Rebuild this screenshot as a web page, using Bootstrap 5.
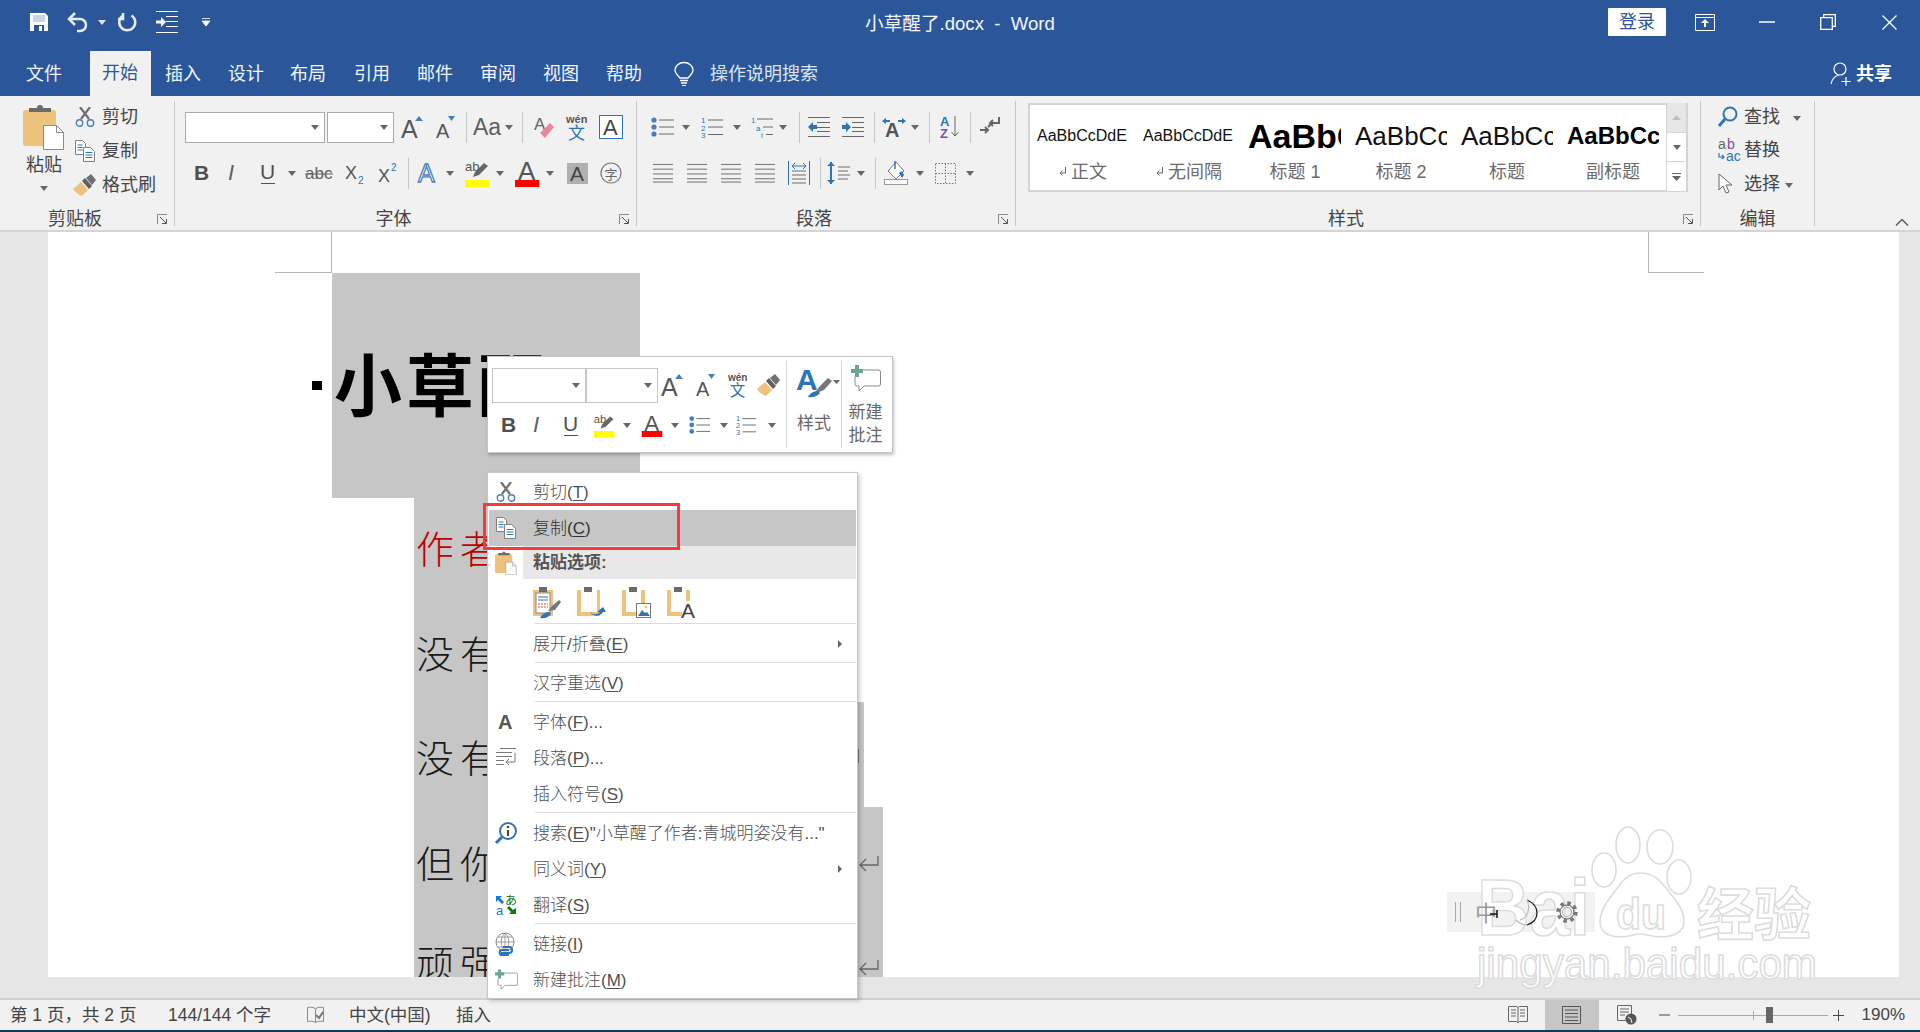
<!DOCTYPE html>
<html lang="zh-CN">
<head>
<meta charset="UTF-8" />
<title>小草醒了.docx - Word</title>
<link href="https://cdn.jsdelivr.net/npm/bootstrap@5.3.0/dist/css/bootstrap.min.css" rel="stylesheet" />
<style>
body { margin: 0; width: 1920px; height: 1032px; overflow: hidden; background: #e6e6e6; color: #444; font: 18px/24px "Liberation Sans", "Noto Sans CJK SC", sans-serif; }
svg { display: block; flex-shrink: 0; overflow: visible; }
svg text { font-family: "Liberation Sans", "Noto Sans CJK SC", sans-serif; }
.app { width: 1920px; height: 1032px; }
/* anchor: a zero-width cell, its content centred on the grid line */
.a { width: 0; display: flex; justify-content: center; align-items: center; white-space: nowrap; }
.row-a { display: grid; align-items: center; }
.arr { width: 0; height: 0; flex-shrink: 0; border-top: 5px solid #666; border-left: 4px solid transparent; border-right: 4px solid transparent; }
.arr-w { border-top-color: #dfe6f1; }
.sp { width: 1px; height: 31px; background: #c6c6c6; flex-shrink: 0; }

.titlebar { height: 51px; background: #2b579a; color: #f2f5fa; display: grid; grid-template-columns: 1fr auto 1fr; align-items: start; }
.qat { height: 44px; margin-left: 39px; grid-template-columns: 39px 24px 25px 40px 39px 0; }
.doc-name { font-size: 18.6px; line-height: 48px; white-space: nowrap; }
.win-side { height: 44px; }
.login { width: 58px; height: 28px; background: #fff; color: #2b579a; border-radius: 1px; line-height: 28px; text-align: center; margin-right: 39px; }
.win-ctl { grid-template-columns: 62px 61px 61px 31px; }
.tabs { height: 45px; background: #2b579a; color: #f2f5fa; }
.tabs .tab-list { grid-template-columns: 76px 63px 63px 62px 64px 63px 63px 63px 63px 60px 26px auto; height: 45px; margin-left: 44px; }
.tab-on { width: 61px; height: 45px; line-height: 45px; background: #f1f1f1; color: #2b579a; text-align: center; flex-shrink: 0; }
.search-tip { color: #dde5f0; }
.share { font-weight: 700; color: #fff; gap: 6px; margin-right: 28px; }

.ribbon { height: 136px; background: #f1f1f1; border-bottom: 2px solid #d4d4d4; display: flex; position: relative; }
.grp { margin-top: 5px; height: 125px; padding-top: 3px; border-right: 1px solid #c6c6c6; flex-shrink: 0; }
.g1 { width: 175px; } .g2 { width: 462px; } .g3 { width: 379px; } .g4 { width: 685px; } .g5 { width: 114px; }
.g-body { height: 104px; display: flow-root; }
.g-label { height: 22px; line-height: 22px; display: flex; color: #444; }
.g-label span { flex-grow: 1; text-align: center; }
.launch { width: 24px; display: flex; align-items: center; justify-content: center; }
.r46 { height: 46px; }
.paste { width: 62px; margin-left: 13px; }
.paste-txt { line-height: 24px; margin-top: 3px; }
.paste .arr { margin-top: 9px; }
.clip-rows { margin-top: -4px; }
.clip-row { height: 34px; display: flex; align-items: center; }
.clip-ic { width: 20px; display: flex; justify-content: center; }
.clip-row span { margin-left: 7px; white-space: nowrap; }
.combo { background: #fff; border: 1px solid #ababab; height: 31px; display: flex; align-items: center; justify-content: flex-end; padding-right: 5px; }
.c1 { width: 140px; margin-left: 10px; } .c2 { width: 67px; margin-left: 2px; }
.f1 { margin-left: 18px; grid-template-columns: 34px 20px 27px 29px 22px 33px 34px 10px; }
.f2 { margin-left: 26px; grid-template-columns: 33px 34px 24px 27px 36px 33px 20px 19px 23px 27px 23px 27px 23px 27px 34px 10px; }
.p1 { margin-left: 26px; grid-template-columns: 23px 27px 24px 26px 20px 16px 20px 34px 21px 20px 21px 14px 21px 20px 20px 10px; }
.p2 { margin-left: 26px; grid-template-columns: 34px 34px 34px 34px 21px 19px 22px 14px 21px 24px 25px 25px 10px; }
.aa { font-size: 23px; color: #5f5f5f; }
.gal { width: 660px; height: 89px; margin: -1px 0 0 12px; border: 2px solid #d4d4d4; background: #fff; display: flex; }
.gal-item { width: 106px; height: 85px; overflow: hidden; flex-shrink: 0; }
.gal-pre { width: 99px; height: 50px; margin-top: 6px; padding-left: 7px; line-height: 50px; color: #111; white-space: nowrap; overflow: hidden; font-family: "Liberation Sans", sans-serif; }
.pre-sm { font-size: 16px; }
.pre-h1 { font-size: 34px; font-weight: 700; color: #000; padding-left: 6px; }
.pre-h2 { font-size: 26px; }
.pre-bd { font-size: 24px; font-weight: 700; color: #000; }
.gal-lab { height: 22px; line-height: 22px; text-align: center; color: #6b6b6b; white-space: nowrap; display: flex; justify-content: center; align-items: center; gap: 4px; }
.gal-scroll { width: 21px; border-left: 1px solid #d4d4d4; display: flex; flex-direction: column; margin-top: -2px; margin-bottom: -2px; }
.gal-scroll div { flex: 1; display: flex; align-items: center; justify-content: center; border-bottom: 1px solid #d4d4d4; background: #fff; }
.gal-scroll .off { background: #e6e6e6; }
.edit-rows { margin-top: -4px; }
.edit-row { height: 33.5px; display: flex; align-items: center; }
.edit-row .ei { width: 54px; padding-left: 17px; display: flex; justify-content: flex-start; }
.edit-row span { margin-left: -11px; white-space: nowrap; }
.edit-row .arr { margin-top: 4px; }
.edit-row .arr-f { margin-left: 13px; }
.edit-row .arr-s { margin-left: 5px; }
.chev { position: absolute; right: 11px; bottom: 4px; }

.doc { height: 766px; background: #e6e6e6; }
.page { width: 1851px; height: 745px; margin-left: 48px; background: #fff; overflow: hidden; color: #000; }
.crop-row { height: 41px; display: flex; }
.crop-l { width: 57px; margin-left: 227px; border-right: 1px solid #b5b5b5; border-bottom: 1px solid #b5b5b5; }
.crop-r { width: 56px; margin-left: 1316px; border-left: 1px solid #b5b5b5; border-bottom: 1px solid #b5b5b5; }
.title-row { display: flex; margin-left: 264px; height: 225px; }
.bullet-col { width: 20px; padding-top: 108px; }
.bullet-sq { width: 10px; height: 9px; background: #000; }
.title-sel { width: 308px; background: #c6c6c6; padding: 74px 0 0 2px; font-size: 68px; line-height: 80px; letter-spacing: 4px; font-weight: 700; white-space: nowrap; color: #000; overflow: hidden; }
.ln { margin-left: 366px; background: #c6c6c6; color: #1a1a1a; font-size: 38px; line-height: 44px; letter-spacing: 6px; font-weight: 300; padding-left: 2px; display: flex; justify-content: space-between; overflow: hidden; }
.ln-1 { height: 102px; width: 440px; padding-top: 30px; color: #c00000; }
.ln-2 { height: 102px; width: 440px; padding-top: 33px; }
.ln-3 { height: 105px; width: 450px; padding-top: 35px; }
.ln-4 { height: 110px; width: 469px; padding-top: 36px; }
.ln-5 { height: 60px; width: 469px; padding-top: 25px; }
.tick { width: 1px; height: 14px; margin: 12px 5px 0 0; background: #777; }
.ret { margin-right: 4px; }
.ln-4 .ret { margin-top: 13px; }
.ln-5 .ret { margin-top: 18px; }

.ctx { position: absolute; left: 487px; top: 472px; width: 371px; height: 527px; padding: 1px; margin: 0; display: block; border: 1px solid #c6c6c6; border-radius: 0; box-shadow: 2px 2px 4px rgba(0,0,0,.2); font-size: 17px; color: #505050; background: #fff; }
.ctx li { list-style: none; }
.ctx .dropdown-item { height: 36px; padding: 0; display: flex; align-items: center; color: #505050; position: relative; }
.ctx .dropdown-item.active { background: #c6c6c6; color: #333; }
.ctx u { text-underline-offset: 2px; }
.mi { width: 34px; display: flex; justify-content: center; flex-shrink: 0; }
.mt { margin-left: 10px; padding-top: 1px; white-space: nowrap; font-weight: 300; }
.sub { width: 0; height: 0; margin-left: auto; margin-right: 14px; border-left: 4px solid #666; border-top: 4px solid transparent; border-bottom: 4px solid transparent; }
.ctx-sep { height: 3px; margin: 0 0 0 46px; border-top: 1px solid #dcdcdc; }
.ctx-head { height: 33px; display: flex; align-items: center; }
.ctx-head .hd { flex-grow: 1; background: #e8e8e8; height: 33px; line-height: 33px; padding-left: 10px; font-weight: 700; color: #555; }
.ctx-paste { height: 44px; display: flex; align-items: center; padding: 4px 0 0 42px; gap: 15px; }
.redbox { position: absolute; left: 483px; top: 503px; width: 197px; height: 47px; border: 3px solid #f43a3a; z-index: 1001; }

.mini { position: absolute; left: 487px; top: 356px; width: 406px; height: 97px; background: #fff; border: 1px solid #c6c6c6; box-shadow: 1px 2px 3px rgba(0,0,0,.25); display: flex; }
.mini-left { width: 299px; border-right: 1px solid #d8d8d8; margin: 4px 0; }
.mini-r1 { height: 48px; display: flex; align-items: center; margin-top: -1px; padding-left: 4px; padding-top: 2px; }
.mini-r1 .combo { height: 35px; border-color: #c6c6c6; }
.mc1 { width: 96px; } .mc2 { width: 74px; }
.m1 { margin-left: 14px; grid-template-columns: 34px 32px 31px 17px; }
.m2 { margin-left: 20px; height: 34px; grid-template-columns: 31px 32px 33px 23px 25px 23px 25px 24px 23px 25px 15px; }
.mini-col { display: flex; flex-direction: column; align-items: center; font-size: 17px; line-height: 23px; color: #666; margin: 4px 0; }
.mc-s { width: 55px; border-right: 1px solid #d8d8d8; }
.mc-c { width: 47px; }
.mc-s svg { margin: 5px 0 14px 6px; }
.mc-c svg { margin: 4px 0 8px 0; }

.statusbar { height: 34px; font-size: 17.5px; background: #f1f1f1; border-top: 2px solid #d0d0d0; border-bottom: 2px solid #0f3a57; display: flex; align-items: center; color: #444; }
.sb-left { padding-left: 10px; grid-template-columns: 158px 139px 42px 107px auto; white-space: nowrap; }
.sb-right { margin-left: auto; display: flex; align-items: center; height: 30px; white-space: nowrap; }
.sb-v { height: 30px; display: flex; align-items: center; justify-content: center; }
.v1 { width: 54px; } .v2 { width: 54px; background: #c6c6c6; } .v3 { width: 56px; } .v4 { width: 20px; }
.slider { width: 150px; height: 1px; margin: 0 1px 0 3px; background: #a8a8a8; position: relative; }
.sl-tick { position: absolute; left: 75px; top: -4px; width: 1px; height: 9px; background: #a8a8a8; }
.sl-thumb { position: absolute; left: 88px; top: -8px; width: 7px; height: 16px; background: #666; }
.zoom-pct { margin: 0 15px 0 13px; font-size: 17px; }

.ime { position: absolute; left: 1447px; top: 892px; width: 148px; height: 40px; background: #f2f2f2; display: flex; align-items: center; }
.ime-bar { width: 6px; height: 20px; margin-left: 8px; border-left: 1px solid #aaa; border-right: 1px solid #aaa; }
.wm { position: absolute; left: 1470px; top: 825px; }
</style>
</head>
<body>
<svg width="0" height="0" class="position-absolute">
  <symbol id="scis" viewBox="0 0 20 20"><path d="M5 0l9 12M15 0L6 12" stroke="#6f6f6f" stroke-width="2.2" fill="none"/><circle cx="4.5" cy="16" r="3.2" fill="none" stroke="#4a7ebb" stroke-width="1.4"/><circle cx="15.5" cy="16" r="3.2" fill="none" stroke="#4a7ebb" stroke-width="1.4"/></symbol>
  <symbol id="copy" viewBox="0 0 20 22"><path d="M.5.5h7l3 3v11H.5z" fill="#fff" stroke="#7f7f7f"/><path d="M8.5 7.5h7l4 4v10h-11z" fill="#fff" stroke="#7f7f7f"/><path d="M2.5 5h5M2.5 7.5h5M2.5 10h5M10.5 12.5h7M10.5 15h7M10.5 17.5h7" stroke="#2e75b6"/></symbol>
  <symbol id="brush" viewBox="0 0 24 22"><path d="M0 15l8-7 7 8-6 6c-3-1-7-4-9-7z" fill="#edc27c"/><path d="M9 7l3-3 7 8-3 3z" fill="#5f5f5f"/><path d="M13 4l5-4 5 6-4 5z" fill="#707070"/></symbol>
  <symbol id="clipb" viewBox="0 0 42 46"><rect x="0" y="6" width="33" height="36" rx="2" fill="#edc27c"/><path d="M6 8V4h8a3 3 0 0 1 6 0h8v4z" fill="#6b6b6b"/><path d="M20.500 21.500h13l7 7v17h-20z" fill="#fff" stroke="#8a8a8a"/><path d="M33.500 21.500v7h7" fill="none" stroke="#8a8a8a"/></symbol>
  <symbol id="launch" viewBox="0 0 11 11"><path d="M.5 10V.5H10" fill="none" stroke="#8a8a8a"/><path d="M3 3l6 6M5 9.500h4.500V5" fill="none" stroke="#555"/></symbol>
  <symbol id="bul" viewBox="0 0 24 20"><g fill="#4a7ebb"><circle cx="3" cy="3" r="2.600"/><circle cx="3" cy="10" r="2.600"/><circle cx="3" cy="17" r="2.600"/></g><path d="M8 3h15M8 10h15M8 17h15" stroke="#666"/></symbol>
  <symbol id="cmt" viewBox="0 0 30 28"><path d="M7.500 5h20a2 2 0 0 1 2 2v12a2 2 0 0 1-2 2H13l-5 5v-5H6a2 2 0 0 1-2-2v-7" fill="#fff" stroke="#888"/><path d="M4 0h4v4h4v4H8v4H4V8H0V4h4z" fill="#6ba58f"/></symbol>
  <symbol id="al" viewBox="0 0 22 20"><path d="M0 1h21M0 6h21M0 11h21M0 16h21M0 19.500h21" stroke="#6b6b6b"/></symbol>
  <symbol id="ret" viewBox="0 0 20 16"><path d="M19 0v9H1M7 3L1 9l6 6" fill="none" stroke="#666" stroke-width="1.300"/></symbol>
</svg>

<div class="app">
  <div class="titlebar">
    <div class="row-a qat">
      <div class="a"><svg width="20" height="20" viewBox="0 0 20 20"><path fill="#fff" d="M1 1h15l3 3v15H1z"/><rect x="4" y="3" width="12" height="7" fill="#c9d6e8"/><rect x="5" y="13" width="10" height="6" fill="#2b579a"/><rect x="10" y="14" width="3" height="5" fill="#fff"/></svg></div>
      <div class="a"><svg width="22" height="20" viewBox="0 0 22 20"><path d="M8 1L2 7l6 6M3 7h10a6 6 0 0 1 0 12h-3" fill="none" stroke="#e6ecf5" stroke-width="2.500"/></svg></div>
      <div class="a"><span class="arr arr-w"></span></div>
      <div class="a"><svg width="20" height="20" viewBox="0 0 20 20"><path d="M6 3.500a8 8 0 1 0 8.500 0M6 1v6H1" fill="none" stroke="#e6ecf5" stroke-width="2.500"/></svg></div>
      <div class="a"><svg width="22" height="22" viewBox="0 0 22 22"><path d="M0 .5h22M10 5.500h12M10 10.500h12M10 15.500h12M0 21.500h22" stroke="#fff"/><path d="M0 9.500h5V6l5 5-5 5v-3.500H0z" fill="#fff"/></svg></div>
      <div class="a"><svg width="8" height="8" viewBox="0 0 8 8"><path d="M0 .5h8M0 3h8L4 8z" stroke="#fff" fill="#fff" stroke-width=".8"/></svg></div>
    </div>
    <div class="doc-name">小草醒了.docx&nbsp; -&nbsp; Word</div>
    <div class="win-side d-flex justify-content-end align-items-center">
      <div class="login">登录</div>
      <div class="row-a win-ctl">
        <div class="a"><svg width="20" height="17" viewBox="0 0 20 17"><path d="M.5.500h19v16H.5zM.5 3.500h19" fill="none" stroke="#fff"/><path d="M10 5l4 4h-3v4H9V9H6z" fill="#fff"/></svg></div>
        <div class="a"><svg width="16" height="2" viewBox="0 0 16 2"><path d="M0 1h16" stroke="#fff" stroke-width="1.500"/></svg></div>
        <div class="a"><svg width="16" height="16" viewBox="0 0 16 16"><path d="M.7 3.700h11.600v11.600H.7zM3.700 3.700V.7h11.600v11.600h-3" fill="none" stroke="#fff" stroke-width="1.300"/></svg></div>
        <div class="a"><svg width="15" height="15" viewBox="0 0 15 15"><path d="M.5.500l14 14M14.500.500l-14 14" stroke="#fff" stroke-width="1.300"/></svg></div>
      </div>
    </div>
  </div>

  <div class="tabs d-flex justify-content-between">
    <div class="row-a tab-list">
      <div class="a">文件</div><div class="a"><div class="tab-on">开始</div></div><div class="a">插入</div><div class="a">设计</div><div class="a">布局</div><div class="a">引用</div><div class="a">邮件</div><div class="a">审阅</div><div class="a">视图</div><div class="a">帮助</div>
      <div class="a"><svg width="20" height="24" viewBox="0 0 20 24"><path d="M6 16C3 13 1 11 1 8a9 7.500 0 0 1 18 0c0 3-2 5-5 8z" fill="none" stroke="#fff" stroke-width="1.300"/><path d="M6 18.500h8M7 21h6" stroke="#fff" stroke-width="1.500"/><path d="M8 23.500h4" stroke="#fff"/></svg></div>
      <div class="search-tip text-nowrap">操作说明搜索</div>
    </div>
    <div class="share d-flex align-items-center">
      <svg width="20" height="24" viewBox="0 0 20 24"><circle cx="10" cy="7" r="6" fill="none" stroke="#fff" stroke-width="1.200"/><path d="M1 22c1-5 4-8 8-9" fill="none" stroke="#fff" stroke-width="1.200"/><path d="M16 15v9M11.500 19.500h9" stroke="#fff" stroke-width="1.200"/></svg>
      <span>共享</span>
    </div>
  </div>

  <div class="ribbon">
    <div class="grp g1">
      <div class="g-body d-flex">
        <div class="paste d-flex flex-column align-items-center">
          <svg width="42" height="46"><use href="#clipb"/></svg>
          <div class="paste-txt">粘贴</div>
          <span class="arr"></span>
        </div>
        <div class="clip-rows">
          <div class="clip-row"><div class="clip-ic"><svg width="20" height="20"><use href="#scis"/></svg></div><span>剪切</span></div>
          <div class="clip-row"><div class="clip-ic"><svg width="20" height="22"><use href="#copy"/></svg></div><span>复制</span></div>
          <div class="clip-row"><div class="clip-ic"><svg width="24" height="22"><use href="#brush"/></svg></div><span>格式刷</span></div>
        </div>
      </div>
      <div class="g-label"><span>剪贴板</span><div class="launch"><svg width="11" height="11"><use href="#launch"/></svg></div></div>
    </div>

    <div class="grp g2">
      <div class="g-body">
        <div class="d-flex align-items-center r46">
          <div class="combo c1"><span class="arr"></span></div>
          <div class="combo c2"><span class="arr"></span></div>
          <div class="row-a f1">
            <div class="a"><svg width="22" height="24" viewBox="0 0 22 24"><text x="0" y="23" font-size="25" fill="#555">A</text><path d="M14 6l4-5 4 5z" fill="#4a7ebb"/></svg></div>
            <div class="a"><svg width="20" height="24" viewBox="0 0 20 24"><text x="0" y="23" font-size="20" fill="#555">A</text><path d="M12 1h7l-3.500 5z" fill="#4a7ebb"/></svg></div>
            <div class="a"><span class="sp"></span></div>
            <div class="a gap-1"><span class="aa">Aa</span><span class="arr"></span></div>
            <div class="a"><span class="sp"></span></div>
            <div class="a"><svg width="20" height="24" viewBox="0 0 20 24"><text x="0" y="15" font-size="17" fill="#666">A</text><path d="M6 18l10-10 4 4-9 11z" fill="#e8899b"/></svg></div>
            <div class="a"><svg width="22" height="26" viewBox="0 0 22 26"><text x="0" y="9" font-size="11" font-weight="700" fill="#555">wén</text><text x="2" y="25" font-size="17" fill="#2e75b6">文</text></svg></div>
            <div class="a"><svg width="24" height="24" viewBox="0 0 24 24"><rect x=".5" y=".5" width="23" height="23" fill="#fff" stroke="#2e75b6"/><text x="4" y="20" font-size="22" fill="#444">A</text></svg></div>
          </div>
        </div>
        <div class="row-a f2 r46">
          <div class="a"><svg width="16" height="22" viewBox="0 0 16 22"><text x="1" y="18" font-size="21" font-weight="700" fill="#505050">B</text></svg></div>
          <div class="a"><svg width="14" height="22" viewBox="0 0 14 22"><text x="1" y="18" font-size="22" font-style="italic" fill="#606060">I</text></svg></div>
          <div class="a"><svg width="16" height="24" viewBox="0 0 16 24"><text x="0" y="18" font-size="21" fill="#505050">U</text><path d="M1 22.500h14" stroke="#505050"/></svg></div>
          <div class="a"><span class="arr"></span></div>
          <div class="a"><svg width="28" height="20" viewBox="0 0 28 20"><text x="0" y="16" font-size="17" fill="#606060">abc</text><path d="M0 11h28" stroke="#606060"/></svg></div>
          <div class="a"><svg width="20" height="22" viewBox="0 0 20 22"><text x="0" y="17" font-size="18" fill="#555">X</text><text x="13" y="22" font-size="10" fill="#2e75b6">2</text></svg></div>
          <div class="a"><svg width="20" height="22" viewBox="0 0 20 22"><text x="0" y="20" font-size="18" fill="#555">X</text><text x="13" y="9" font-size="10" fill="#2e75b6">2</text></svg></div>
          <div class="a"><span class="sp"></span></div>
          <div class="a"><svg width="20" height="24" viewBox="0 0 20 24"><text x="1" y="21" font-size="25" fill="#fff" stroke="#4a7ebb" stroke-width="1.300">A</text></svg></div>
          <div class="a"><span class="arr"></span></div>
          <div class="a"><svg width="24" height="28" viewBox="0 0 24 28"><text x="0" y="12" font-size="13" fill="#555">ab</text><path d="M8 18l2-5 9-9 4 3-9 9z" fill="#666"/><rect x="0" y="21" width="24" height="7" fill="#ffff00"/></svg></div>
          <div class="a"><span class="arr"></span></div>
          <div class="a"><svg width="24" height="28" viewBox="0 0 24 28"><text x="3" y="21" font-size="26" fill="#555">A</text><rect x="0" y="21" width="24" height="7" fill="#f00"/></svg></div>
          <div class="a"><span class="arr"></span></div>
          <div class="a"><svg width="21" height="21" viewBox="0 0 21 21"><rect width="21" height="21" fill="#b0b0b0"/><text x="3" y="18" font-size="21" fill="#444">A</text></svg></div>
          <div class="a"><svg width="22" height="22" viewBox="0 0 22 22"><circle cx="11" cy="11" r="10" fill="none" stroke="#777" stroke-width="1.200"/><text x="4.500" y="17" font-size="13" fill="#666">字</text></svg></div>
        </div>
      </div>
      <div class="g-label"><span>字体</span><div class="launch"><svg width="11" height="11"><use href="#launch"/></svg></div></div>
    </div>

    <div class="grp g3">
      <div class="g-body">
        <div class="row-a p1 r46">
          <div class="a"><svg width="24" height="20"><use href="#bul"/></svg></div>
          <div class="a"><span class="arr"></span></div>
          <div class="a"><svg width="24" height="22" viewBox="0 0 24 22"><g font-size="8" fill="#2e75b6"><text x="0" y="7">1</text><text x="0" y="14.500">2</text><text x="0" y="22">3</text></g><path d="M7 4h15M7 11h15M7 18.500h15" stroke="#666"/></svg></div>
          <div class="a"><span class="arr"></span></div>
          <div class="a"><svg width="24" height="22" viewBox="0 0 24 22"><g font-size="8" fill="#2e75b6"><text x="0" y="7">1</text><text x="5" y="14.500">a</text><text x="10" y="22">i</text></g><path d="M6 3h16M12 11h10M15 18.500h7" stroke="#666"/></svg></div>
          <div class="a"><span class="arr"></span></div>
          <div class="a"><span class="sp"></span></div>
          <div class="a"><svg width="22" height="20" viewBox="0 0 22 20"><path d="M0 .5h22M9 5.500h13M9 10.500h13M9 14.500h13M0 19.500h22" stroke="#666"/><path d="M0 10l5-5v3h4v4H5v3z" fill="#2e75b6"/></svg></div>
          <div class="a"><svg width="22" height="20" viewBox="0 0 22 20"><path d="M0 .5h22M10 5.500h12M10 10.500h12M10 14.500h12M0 19.500h22" stroke="#666"/><path d="M9 10L4 5v3H0v4h4v3z" fill="#2e75b6"/></svg></div>
          <div class="a"><span class="sp"></span></div>
          <div class="a"><svg width="24" height="20" viewBox="0 0 24 20"><text x="3" y="20" font-size="20" font-weight="700" fill="#555">A</text><path d="M0 4l4-3v2h4v2H4v2zM24 4l-4-3v2h-4v2h4v2z" fill="#2e75b6"/></svg></div>
          <div class="a"><span class="arr"></span></div>
          <div class="a"><span class="sp"></span></div>
          <div class="a"><svg width="20" height="24" viewBox="0 0 20 24"><text x="0" y="11" font-size="13" font-weight="700" fill="#2e75b6">A</text><text x="0" y="23" font-size="13" font-weight="700" fill="#7f4fa6">Z</text><path d="M15 1v20M11.500 17l3.500 4 3.500-4" fill="none" stroke="#666"/></svg></div>
          <div class="a"><span class="sp"></span></div>
          <div class="a"><svg width="20" height="20" viewBox="0 0 20 20"><path d="M19 0v6H10M13 3l-3 3 3 3" fill="none" stroke="#666" stroke-width="2"/><path d="M0 13h8M5 10l3 3-3 3M12 6L8 10" fill="none" stroke="#666" stroke-width="2"/></svg></div>
        </div>
        <div class="row-a p2 r46">
          <div class="a"><svg width="21" height="20"><use href="#al"/></svg></div>
          <div class="a"><svg width="21" height="20"><use href="#al"/></svg></div>
          <div class="a"><svg width="21" height="20"><use href="#al"/></svg></div>
          <div class="a"><svg width="21" height="20"><use href="#al"/></svg></div>
          <div class="a"><svg width="22" height="24" viewBox="0 0 22 24"><path d="M4 10h14M4 14h14M4 18h14M4 22h14" stroke="#6b6b6b"/><path d="M.5 0v24M21.500 0v24M4 5h14M7 2L4 5l3 3M15 2l3 3-3 3" fill="none" stroke="#2e75b6"/></svg></div>
          <div class="a"><span class="sp"></span></div>
          <div class="a"><svg width="24" height="24" viewBox="0 0 24 24"><path d="M4 1v22" stroke="#2e75b6" stroke-width="2"/><path d="M0 5l4-4 4 4zM0 19l4 4 4-4z" fill="#2e75b6"/><path d="M11 6h12M11 10h10M11 14h12M11 18h10" stroke="#6b6b6b"/></svg></div>
          <div class="a"><span class="arr"></span></div>
          <div class="a"><span class="sp"></span></div>
          <div class="a"><svg width="24" height="24" viewBox="0 0 24 24"><path d="M12 1l8 9-8 8-8-8z" fill="#fff" stroke="#777"/><path d="M11 0v8" stroke="#2e75b6" stroke-width="1.500"/><path d="M15 12l3-2 2 4-2 3z" fill="#2e75b6"/><rect x=".5" y="18.500" width="23" height="5" fill="#fff" stroke="#999"/></svg></div>
          <div class="a"><span class="arr"></span></div>
          <div class="a"><svg width="21" height="21" viewBox="0 0 21 21"><path d="M.5.500h20v20H.5zM10.500.500v20M.5 10.500h20" fill="none" stroke="#777" stroke-dasharray="1.500 1.500"/></svg></div>
          <div class="a"><span class="arr"></span></div>
        </div>
      </div>
      <div class="g-label"><span>段落</span><div class="launch"><svg width="11" height="11"><use href="#launch"/></svg></div></div>
    </div>

    <div class="grp g4">
      <div class="g-body">
        <div class="gal">
          <div class="gal-item"><div class="gal-pre pre-sm">AaBbCcDdE</div><div class="gal-lab"><svg width="8" height="10" viewBox="0 0 8 10"><path d="M6.500 0v6H1M3.500 3.500L1 6l2.500 2.500" fill="none" stroke="#666"/></svg>正文</div></div>
          <div class="gal-item"><div class="gal-pre pre-sm">AaBbCcDdE</div><div class="gal-lab"><svg width="8" height="10" viewBox="0 0 8 10"><path d="M6.500 0v6H1M3.500 3.500L1 6l2.500 2.500" fill="none" stroke="#666"/></svg>无间隔</div></div>
          <div class="gal-item"><div class="gal-pre pre-h1">AaBbCc</div><div class="gal-lab">标题 1</div></div>
          <div class="gal-item"><div class="gal-pre pre-h2">AaBbCc</div><div class="gal-lab">标题 2</div></div>
          <div class="gal-item"><div class="gal-pre pre-h2">AaBbCc</div><div class="gal-lab">标题</div></div>
          <div class="gal-item"><div class="gal-pre pre-bd">AaBbCc</div><div class="gal-lab">副标题</div></div>
          <div class="gal-scroll">
            <div class="off"><svg width="9" height="5" viewBox="0 0 9 5"><path d="M4.500 0L9 5H0z" fill="#c0c0c0"/></svg></div>
            <div><span class="arr"></span></div>
            <div><svg width="9" height="8" viewBox="0 0 9 8"><path d="M0 .5h9" stroke="#666"/><path d="M0 3h9L4.500 8z" fill="#666"/></svg></div>
          </div>
        </div>
      </div>
      <div class="g-label"><span>样式</span><div class="launch"><svg width="11" height="11"><use href="#launch"/></svg></div></div>
    </div>

    <div class="grp g5">
      <div class="g-body">
        <div class="edit-rows">
          <div class="edit-row"><div class="ei"><svg width="20" height="22" viewBox="0 0 20 22"><circle cx="12" cy="8" r="6.500" fill="none" stroke="#2e75b6" stroke-width="2"/><path d="M7 13l-6 7" stroke="#2e75b6" stroke-width="3"/></svg></div><span>查找</span><span class="arr arr-f"></span></div>
          <div class="edit-row"><div class="ei"><svg width="24" height="24" viewBox="0 0 24 24"><text x="0" y="11" font-size="14" fill="#666">a</text><text x="9" y="11" font-size="14" fill="#7f4fa6">b</text><text x="8" y="23" font-size="14" fill="#2e75b6">ac</text><path d="M1 15v4h5M4 17l2 2-2 2" fill="none" stroke="#2e75b6" stroke-width="1.200"/></svg></div><span>替换</span></div>
          <div class="edit-row"><div class="ei"><svg width="16" height="22" viewBox="0 0 16 22"><path d="M1 1v16l4-4 3 7 3-1-3-7h6z" fill="#fff" stroke="#666"/></svg></div><span>选择</span><span class="arr arr-s"></span></div>
        </div>
      </div>
      <div class="g-label"><span>编辑</span></div>
    </div>
    <svg class="chev" width="14" height="8" viewBox="0 0 14 8"><path d="M1 7.500l6-6 6 6" fill="none" stroke="#555" stroke-width="1.300"/></svg>
  </div>

  <div class="doc">
    <div class="page">
      <div class="crop-row"><div class="crop-l"></div><div class="crop-r"></div></div>
      <div class="title-row">
        <div class="bullet-col"><div class="bullet-sq"></div></div>
        <div class="title-sel">小草醒</div>
      </div>
      <div class="ln ln-1"><span>作者</span></div>
      <div class="ln ln-2"><span>没有</span></div>
      <div class="ln ln-3"><span>没有</span><span class="tick"></span></div>
      <div class="ln ln-4"><span>但你</span><svg class="ret" width="20" height="16"><use href="#ret"/></svg></div>
      <div class="ln ln-5"><span>顽强</span><svg class="ret" width="20" height="16"><use href="#ret"/></svg></div>
    </div>
  </div>

  <div class="statusbar">
    <div class="row-a sb-left">
      <div>第 1 页，共 2 页</div>
      <div>144/144 个字</div>
      <div><svg width="18" height="18" viewBox="0 0 18 18"><path d="M8.500 3C7 1 3 1 .5 1.500v14c3-.5 6-.5 8 1 2-1.500 5-1.500 8-1V1.500C14 1 10 1 8.500 3zv13" fill="none" stroke="#888"/><path d="M9 9l3 3 4-6" fill="none" stroke="#777" stroke-width="2"/></svg></div>
      <div>中文(中国)</div>
      <div>插入</div>
    </div>
    <div class="sb-right">
      <div class="sb-v v1"><svg width="20" height="18" viewBox="0 0 20 18"><path d="M.5.500h8l1.500 1 1.500-1h8v15h-8L10 17l-1.500-1.500h-8zM10 1.500V17M3 4h5M3 7h5M3 10h5M12 4h5M12 7h5M12 10h5" fill="none" stroke="#666"/></svg></div>
      <div class="sb-v v2"><svg width="19" height="18" viewBox="0 0 19 18"><path d="M.5.500h18v17H.5zM3 4h13M3 7.500h13M3 11h13M3 14.500h13" fill="none" stroke="#555"/></svg></div>
      <div class="sb-v v3"><svg width="20" height="20" viewBox="0 0 20 20"><path d="M.5.500h14v15H.5zM3 4h9M3 7h9M3 10h5" fill="none" stroke="#666"/><circle cx="14" cy="14" r="5.500" fill="#555"/><path d="M11 12l3 2 1 4" fill="none" stroke="#fff"/></svg></div>
      <div class="sb-v v4"><svg width="11" height="2" viewBox="0 0 11 2"><path d="M0 1h11" stroke="#444"/></svg></div>
      <div class="slider"><span class="sl-tick"></span><span class="sl-thumb"></span></div>
      <div class="sb-v v4"><svg width="11" height="11" viewBox="0 0 11 11"><path d="M0 5.500h11M5.500 0v11" stroke="#444"/></svg></div>
      <div class="zoom-pct">190%</div>
    </div>
  </div>

  <div class="mini">
    <div class="mini-left">
      <div class="mini-r1">
        <div class="combo mc1"><span class="arr"></span></div>
        <div class="combo mc2"><span class="arr"></span></div>
        <div class="row-a m1">
          <div class="a"><svg width="22" height="24" viewBox="0 0 22 24"><text x="0" y="23" font-size="25" fill="#555">A</text><path d="M14 6l4-5 4 5z" fill="#4a7ebb"/></svg></div>
          <div class="a"><svg width="20" height="24" viewBox="0 0 20 24"><text x="0" y="23" font-size="20" fill="#555">A</text><path d="M12 1h7l-3.500 5z" fill="#4a7ebb"/></svg></div>
          <div class="a"><svg width="20" height="24" viewBox="0 0 22 26"><text x="0" y="9" font-size="11" font-weight="700" fill="#555">wén</text><text x="2" y="25" font-size="17" fill="#2e75b6">文</text></svg></div>
          <div class="a"><svg width="24" height="22"><use href="#brush"/></svg></div>
        </div>
      </div>
      <div class="row-a m2">
        <div class="a"><svg width="16" height="22" viewBox="0 0 16 22"><text x="1" y="18" font-size="21" font-weight="700" fill="#505050">B</text></svg></div>
        <div class="a"><svg width="14" height="22" viewBox="0 0 14 22"><text x="1" y="18" font-size="22" font-style="italic" fill="#606060">I</text></svg></div>
        <div class="a"><svg width="16" height="24" viewBox="0 0 16 24"><text x="0" y="18" font-size="21" fill="#505050">U</text><path d="M1 22.500h14" stroke="#505050"/></svg></div>
        <div class="a"><svg width="24" height="24" viewBox="0 0 24 28"><text x="0" y="12" font-size="13" fill="#555">ab</text><path d="M8 18l2-5 9-9 4 3-9 9z" fill="#666"/><rect x="0" y="21" width="24" height="7" fill="#ffff00"/></svg></div>
        <div class="a"><span class="arr"></span></div>
        <div class="a"><svg width="24" height="24" viewBox="0 0 24 28"><text x="3" y="21" font-size="26" fill="#555">A</text><rect x="0" y="21" width="24" height="7" fill="#f00"/></svg></div>
        <div class="a"><span class="arr"></span></div>
        <div class="a"><svg width="22" height="20"><use href="#bul"/></svg></div>
        <div class="a"><span class="arr"></span></div>
        <div class="a"><svg width="22" height="20" viewBox="0 0 24 22"><g font-size="8" fill="#2e75b6"><text x="0" y="7">1</text><text x="0" y="14.500">2</text><text x="0" y="22">3</text></g><path d="M7 4h15M7 11h15M7 18.500h15" stroke="#666"/></svg></div>
        <div class="a"><span class="arr"></span></div>
      </div>
    </div>
    <div class="mini-col mc-s">
      <svg width="42" height="32" viewBox="0 0 42 32"><text x="0" y="24" font-size="30" font-weight="700" fill="#2e75b6">A</text><path d="M18 28l6-8 8-8 4 3-8 9z" fill="#777"/><path d="M12 31c2-4 6-6 10-6l2 2c-2 3-7 5-12 4z" fill="#2e75b6"/><path d="M37 14h7l-3.500 4z" fill="#666"/></svg>
      <span>样式</span>
    </div>
    <div class="mini-col mc-c">
      <svg width="30" height="28"><use href="#cmt"/></svg>
      <span>新建</span><span>批注</span>
    </div>
  </div>

  <ul class="dropdown-menu ctx">
    <li><a class="dropdown-item"><span class="mi"><svg width="20" height="20"><use href="#scis"/></svg></span><span class="mt">剪切(<u>T</u>)</span></a></li>
    <li><a class="dropdown-item active"><span class="mi"><svg width="20" height="22"><use href="#copy"/></svg></span><span class="mt">复制(<u>C</u>)</span></a></li>
    <li class="ctx-head"><span class="mi"><svg width="22" height="24" viewBox="0 0 42 46"><use href="#clipb" width="42" height="46"/></svg></span><span class="hd">粘贴选项:</span></li>
    <li class="ctx-paste">
      <svg width="30" height="32" viewBox="0 0 30 32"><path d="M2 3h20v26H2z" fill="#edc27c"/><rect x="5" y="6" width="14" height="20" fill="#fff" stroke="#888"/><path d="M8 0h8v5H8z" fill="#6b6b6b"/><path d="M7 10h10M7 13h10" stroke="#2e75b6"/><path d="M7 17h10M7 20h10" stroke="#c0504d" stroke-dasharray="2 1"/><path d="M17 24l4-5 7-6 2 2-6 8z" fill="#777"/><path d="M9 31c2-4 6-6 9-6l2 2c-2 3-6 5-11 4z" fill="#2e75b6"/></svg>
      <svg width="30" height="32" viewBox="0 0 30 32"><path d="M1 3h4v22h16V3h3v26H1z" fill="#edc27c"/><path d="M8 0h8v5H8z" fill="#6b6b6b"/><path d="M14 25c3 3 7 3 10 0h-3l6-5 3 5h-3c-3 5-10 5-13 0z" fill="#2e75b6"/></svg>
      <svg width="30" height="32" viewBox="0 0 30 32"><path d="M1 3h4v22h12v4H1zM20 3h4v13h-4z" fill="#edc27c"/><path d="M8 0h8v5H8z" fill="#6b6b6b"/><rect x="15.500" y="16.500" width="14" height="14" fill="#fff" stroke="#777"/><path d="M17 29l4-6 3 3 2-1 3 4z" fill="#2e75b6"/><circle cx="25" cy="20" r="1.500" fill="#edc27c"/></svg>
      <svg width="30" height="32" viewBox="0 0 30 32"><path d="M1 3h4v22h11v4H1zM20 3h4v11h-4z" fill="#edc27c"/><path d="M8 0h8v5H8z" fill="#6b6b6b"/><text x="15" y="31" font-size="21" fill="#444">A</text></svg>
    </li>
    <li class="ctx-sep"></li>
    <li><a class="dropdown-item"><span class="mi"></span><span class="mt">展开/折叠(<u>E</u>)</span><span class="sub"></span></a></li>
    <li class="ctx-sep"></li>
    <li><a class="dropdown-item"><span class="mi"></span><span class="mt">汉字重选(<u>V</u>)</span></a></li>
    <li class="ctx-sep"></li>
    <li><a class="dropdown-item"><span class="mi"><svg width="18" height="18" viewBox="0 0 18 18"><text x="1" y="16" font-size="20" font-weight="700" fill="#555">A</text></svg></span><span class="mt">字体(<u>F</u>)...</span></a></li>
    <li><a class="dropdown-item"><span class="mi"><svg width="20" height="20" viewBox="0 0 20 20"><path d="M4 .5h16M0 4.500h16M0 8.500h16M0 12.500h8M0 16.500h8M19 5v9h-9M13 11l-3 3 3 3" fill="none" stroke="#777"/></svg></span><span class="mt">段落(<u>P</u>)...</span></a></li>
    <li><a class="dropdown-item"><span class="mi"></span><span class="mt">插入符号(<u>S</u>)</span></a></li>
    <li class="ctx-sep"></li>
    <li><a class="dropdown-item"><span class="mi"><svg width="22" height="22" viewBox="0 0 22 22"><circle cx="13" cy="9" r="8" fill="#fff" stroke="#2e75b6" stroke-width="2"/><path d="M7 15l-6 6" stroke="#2e75b6" stroke-width="3"/><circle cx="13" cy="5" r="1.300" fill="#444"/><path d="M13 8v6" stroke="#444" stroke-width="2"/></svg></span><span class="mt">搜索(<u>E</u>)"小草醒了作者:青城明姿没有..."</span></a></li>
    <li><a class="dropdown-item"><span class="mi"></span><span class="mt">同义词(<u>Y</u>)</span><span class="sub"></span></a></li>
    <li><a class="dropdown-item"><span class="mi"><svg width="21" height="22" viewBox="0 0 21 22"><text x="0" y="21" font-size="13" fill="#0f7bd9">a</text><text x="9" y="11" font-size="12" fill="#117711">あ</text><path d="M0 2h6L4 4l4 4-2 2-4-4-2 2z" fill="#0f7bd9"/><path d="M20 20h-7l2-2-4-4 2-2 4 4 3-2z" fill="#117711"/></svg></span><span class="mt">翻译(<u>S</u>)</span></a></li>
    <li class="ctx-sep"></li>
    <li><a class="dropdown-item"><span class="mi"><svg width="22" height="24" viewBox="0 0 22 24"><circle cx="10" cy="10" r="9" fill="#fff" stroke="#888"/><path d="M1 10h18M10 1v18M3 5h14M3 15h14M10 1c-5 4-5 14 0 18M10 1c5 4 5 14 0 18" fill="none" stroke="#888" stroke-width=".8"/><path d="M8 15h6a3 3 0 0 1 0 6H6" fill="none" stroke="#2e75b6" stroke-width="2.200"/><path d="M14 18H6a3 3 0 0 0 0 5h8" fill="none" stroke="#2e75b6" stroke-width="2.200"/></svg></span><span class="mt">链接(<u>I</u>)</span></a></li>
    <li><a class="dropdown-item"><span class="mi"><svg width="23" height="22" viewBox="0 0 30 28"><use href="#cmt" width="30" height="28"/></svg></span><span class="mt">新建批注(<u>M</u>)</span></a></li>
  </ul>
  <div class="redbox"></div>

  <div class="ime"><span class="ime-bar"></span></div>
  <svg class="wm" width="360" height="170" viewBox="0 0 360 170">
    <g fill="#fff" stroke="#dcdcdc" stroke-width="1.600">
      <text x="7" y="110" font-size="80" font-weight="700" textLength="113" lengthAdjust="spacingAndGlyphs">Bai</text>
      <ellipse cx="158" cy="20" rx="12" ry="18"/><ellipse cx="190" cy="22" rx="13" ry="17"/><ellipse cx="134" cy="45" rx="12" ry="17"/><ellipse cx="209" cy="52" rx="12" ry="17"/>
      <path d="M170 48c-14 0-20 12-28 22s-12 18-12 26c0 12 10 16 22 16 8 0 12-3 18-3s12 3 20 3c12 0 24-4 24-16 0-10-6-18-14-28s-14-20-30-20z"/>
      <text x="146" y="104" font-size="44" font-weight="700" textLength="50" lengthAdjust="spacingAndGlyphs">du</text>
      <text x="227" y="110" font-size="57" font-weight="700">经验</text>
      <text x="7" y="154" font-size="44" textLength="340" lengthAdjust="spacingAndGlyphs">jingyan.baidu.com</text>
    </g>
    <text x="5" y="96" font-size="22" fill="#999">中</text>
    <path d="M20 89h7M27 85v8" fill="none" stroke="#111" stroke-width="1.500"/>
    <path d="M57 75c7 3 10 8 10 13 0 6-4 10-10 12" fill="none" stroke="#222" stroke-width="1.300"/>
    <path d="M46 95c4 4 8 5 11 5M57 75c2 4 2 8 1 12-1 4-4 7-8 8" fill="none" stroke="#bbb" stroke-width="1.200"/>
    <g transform="translate(97 87)" fill="none"><circle r="9" stroke="#777" stroke-width="3.500" stroke-dasharray="3.500 3.570"/><circle r="7" stroke="#555" stroke-width="1"/><circle r="4.500" stroke="#aaa" stroke-width="1.200"/></g>
  </svg>
</div>
<script src="https://cdn.jsdelivr.net/npm/bootstrap@5.3.0/dist/js/bootstrap.bundle.min.js"></script>
</body>
</html>
